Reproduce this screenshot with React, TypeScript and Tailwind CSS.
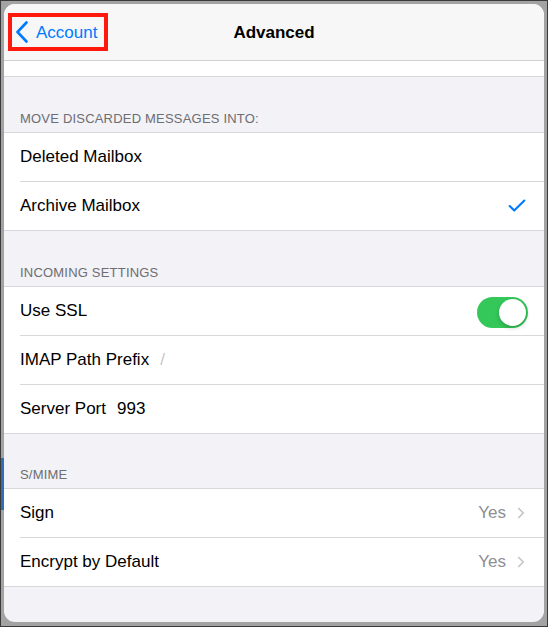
import { Check, ChevronRight } from "lucide-react";

const font = { fontFamily: '"Liberation Sans", Arial, sans-serif' };

export default function App() {
  return (
    <div
      className="relative w-[548px] h-[627px] bg-[#a3a3a3] border border-[#3a3a3a] pt-[3px] pl-[3px] pr-[3px] pb-[4px]"
      style={font}
    >
      <div className="absolute left-0 top-[457px] w-[3px] h-[52px] bg-[#2f6fb8]" />
      <div className="flex flex-col h-full rounded-[11px] overflow-hidden bg-[#f2f2f7]">
        <NavBar />
        <div className="h-[16px] bg-white border-b border-[#d8d8dc]" />
        <SectionHeader title="MOVE DISCARDED MESSAGES INTO:" />
        <Group>
          <Row label="Deleted Mailbox" />
          <Row label="Archive Mailbox" last right={<Check className="w-[22px] h-[22px] text-[#007aff]" strokeWidth={2.3} />} />
        </Group>
        <SectionHeader title="INCOMING SETTINGS" />
        <Group>
          <Row label="Use SSL" right={<Toggle />} />
          <Row label="IMAP Path Prefix" value="/" valueClass="text-[#c7c7cc]" />
          <Row label="Server Port" value="993" last />
        </Group>
        <SectionHeader title="S/MIME" tight />
        <Group>
          <Row label="Sign" right={<Disclosure text="Yes" />} />
          <Row label="Encrypt by Default" last right={<Disclosure text="Yes" />} />
        </Group>
      </div>
    </div>
  );
}

function NavBar() {
  return (
    <div className="relative h-[57px] flex items-center justify-center bg-[#f7f7f7] border-b border-[#d0d0d3]">
      <div className="absolute left-[4px] top-[9px] w-[100px] h-[38px] border-4 border-[#ff1a0d] flex items-center pl-[3px]">
        <svg width="14" height="22" viewBox="0 0 14 22" fill="none" stroke="#007aff" strokeWidth="2.6" strokeLinecap="round" strokeLinejoin="round">
          <path d="M11.5 1.5 L2.5 11 L11.5 20.5" />
        </svg>
        <span className="text-[17px] text-[#007aff] ml-[7px] mt-[1px]">Account</span>
      </div>
      <span className="text-[17px] font-semibold text-black mt-[2px]">Advanced</span>
    </div>
  );
}

function SectionHeader({ title, tight }: { title: string; tight?: boolean }) {
  return (
    <div
      className={
        "flex items-end pb-[7px] px-[16px] border-b border-[#d8d8dc] " +
        (tight ? "h-[55px]" : "h-[56px]")
      }
    >
      <span className="text-[13px] text-[#6d6d72] leading-none tracking-[0.2px]">{title}</span>
    </div>
  );
}

function Group({ children }: { children: React.ReactNode }) {
  return <div className="bg-white">{children}</div>;
}

function Row({
  label,
  value,
  valueClass,
  right,
  last,
}: {
  label: string;
  value?: string;
  valueClass?: string;
  right?: React.ReactNode;
  last?: boolean;
}) {
  return (
    <div className={"pl-[16px] " + (last ? "border-b border-[#d8d8dc]" : "")}>
      <div
        className={
          "flex items-center pr-[16px] " +
          (last ? "h-[48px]" : "h-[49px] border-b border-[#d8d8dc]")
        }
      >
        <span className="text-[17px] text-black">{label}</span>
        {value && (
          <span className={"text-[17px] ml-[11px] " + (valueClass ?? "text-black")}>{value}</span>
        )}
        <div className="ml-auto flex items-center">{right}</div>
      </div>
    </div>
  );
}

function Toggle() {
  return (
    <div className="w-[51px] h-[31px] rounded-full bg-[#34c759] flex items-center justify-end pr-[2px] mt-[2px]">
      <div className="w-[27px] h-[27px] rounded-full bg-white shadow-[0_2px_4px_rgba(0,0,0,0.2)]" />
    </div>
  );
}

function Disclosure({ text }: { text: string }) {
  return (
    <div className="flex items-center gap-[6px]">
      <span className="text-[17px] text-[#8e8e93]">{text}</span>
      <ChevronRight className="w-[18px] h-[20px] text-[#c4c4c7] -mr-[2px]" strokeWidth={2.2} />
    </div>
  );
}
